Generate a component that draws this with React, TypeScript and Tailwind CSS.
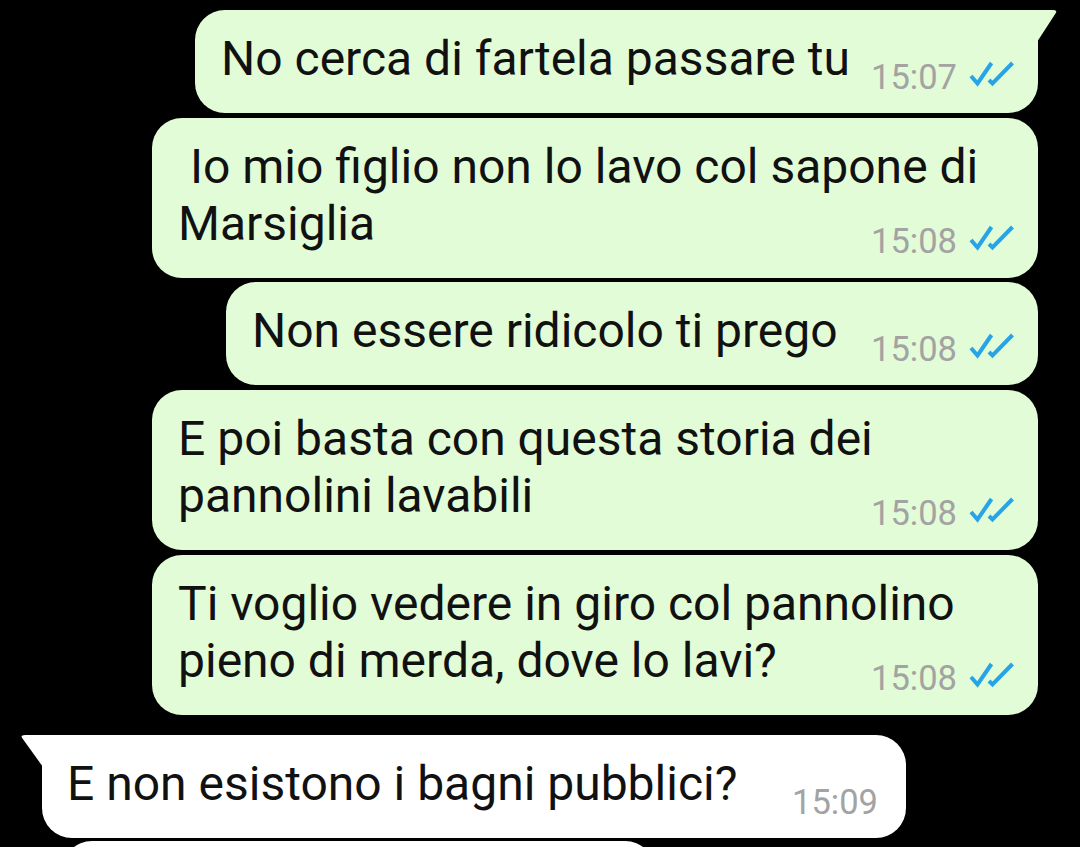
import clsx from "clsx";

type Message = {
  text: string;
  time: string;
  width: string;
  gap: string;
  multi?: boolean;
  tail?: boolean;
};

const outgoing: Message[] = [
  { text: "No cerca di fartela passare tu", time: "15:07", width: "w-[843px]", gap: "mt-[10px]", tail: true },
  {
    text: "\u00a0Io mio figlio non lo lavo col sapone di Marsiglia",
    time: "15:08",
    width: "w-[886px]",
    gap: "mt-[5px]",
    multi: true,
  },
  { text: "Non essere ridicolo ti prego", time: "15:08", width: "w-[812px]", gap: "mt-[4px]" },
  {
    text: "E poi basta con questa storia dei pannolini lavabili",
    time: "15:08",
    width: "w-[886px]",
    gap: "mt-[5px]",
    multi: true,
  },
  {
    text: "Ti voglio vedere in giro col pannolino pieno di merda, dove lo lavi?",
    time: "15:08",
    width: "w-[886px]",
    gap: "mt-[5px]",
    multi: true,
  },
];

function DoubleCheck() {
  return (
    <svg viewBox="0 0 48 28" className="mt-[1px] h-[28px] w-[48px] shrink-0" fill="none">
      <path d="M3 17 L9.5 24.5 L23.5 4" stroke="#27a4e8" strokeWidth="4" />
      <path d="M21 21 L24.5 24.5 L44.5 4" stroke="#27a4e8" strokeWidth="4" />
    </svg>
  );
}

function Meta({ time, read, className }: { time: string; read?: boolean; className?: string }) {
  return (
    <div className={clsx("flex shrink-0 items-start gap-[11px]", className)}>
      <span className="text-[34.5px] leading-[38px] text-[#a3a3a3]">{time}</span>
      {read && <DoubleCheck />}
    </div>
  );
}

function OutBubble({ msg }: { msg: Message }) {
  return (
    <div
      className={clsx(
        "relative rounded-[30px] bg-[#e1fcd6] pl-[26px] pr-[22px] pt-[20px]",
        msg.multi ? "pb-[18px]" : "pb-[17px]",
        msg.width,
        msg.gap,
        msg.tail && "rounded-tr-none"
      )}
    >
      {msg.tail && (
        <svg viewBox="0 0 21 32" className="absolute -right-[20px] top-0 h-[32px] w-[21px]">
          <path d="M0 0 H16 Q21 0 18.5 3.5 L0 32 Z" fill="#e1fcd6" />
        </svg>
      )}
      {msg.multi ? (
        <>
          <p className="text-[48px] leading-[57px] text-[#111]">{msg.text}</p>
          <Meta time={msg.time} read className="-mt-[30px] justify-end" />
        </>
      ) : (
        <div className="flex items-start justify-between">
          <p className="text-[48px] leading-[57px] text-[#111]">{msg.text}</p>
          <Meta time={msg.time} read className="mt-[28px]" />
        </div>
      )}
    </div>
  );
}

export default function App() {
  return (
    <div className="h-[847px] w-[1080px] overflow-hidden bg-black font-[Roboto,sans-serif]">
      <div className="flex flex-col items-end pr-[42px]">
        {outgoing.map((msg, i) => (
          <OutBubble key={i} msg={msg} />
        ))}
      </div>

      <div className="relative ml-[42px] mt-[20px] w-[864px] rounded-[30px] rounded-tl-none bg-white pb-[17px] pl-[25px] pr-[28px] pt-[20px]">
        <svg viewBox="0 0 23 32" className="absolute -left-[22px] top-0 h-[32px] w-[23px]">
          <path d="M23 0 H5 Q0 0 2.5 3.5 L23 32 Z" fill="#ffffff" />
        </svg>
        <div className="flex items-start justify-between">
          <p className="text-[48px] leading-[57px] text-[#111]">E non esistono i bagni pubblici?</p>
          <Meta time="15:09" className="mt-[28px]" />
        </div>
      </div>

      <div className="ml-[62px] mt-[3px] h-[40px] w-[593px] rounded-t-[30px] bg-white" />
    </div>
  );
}
